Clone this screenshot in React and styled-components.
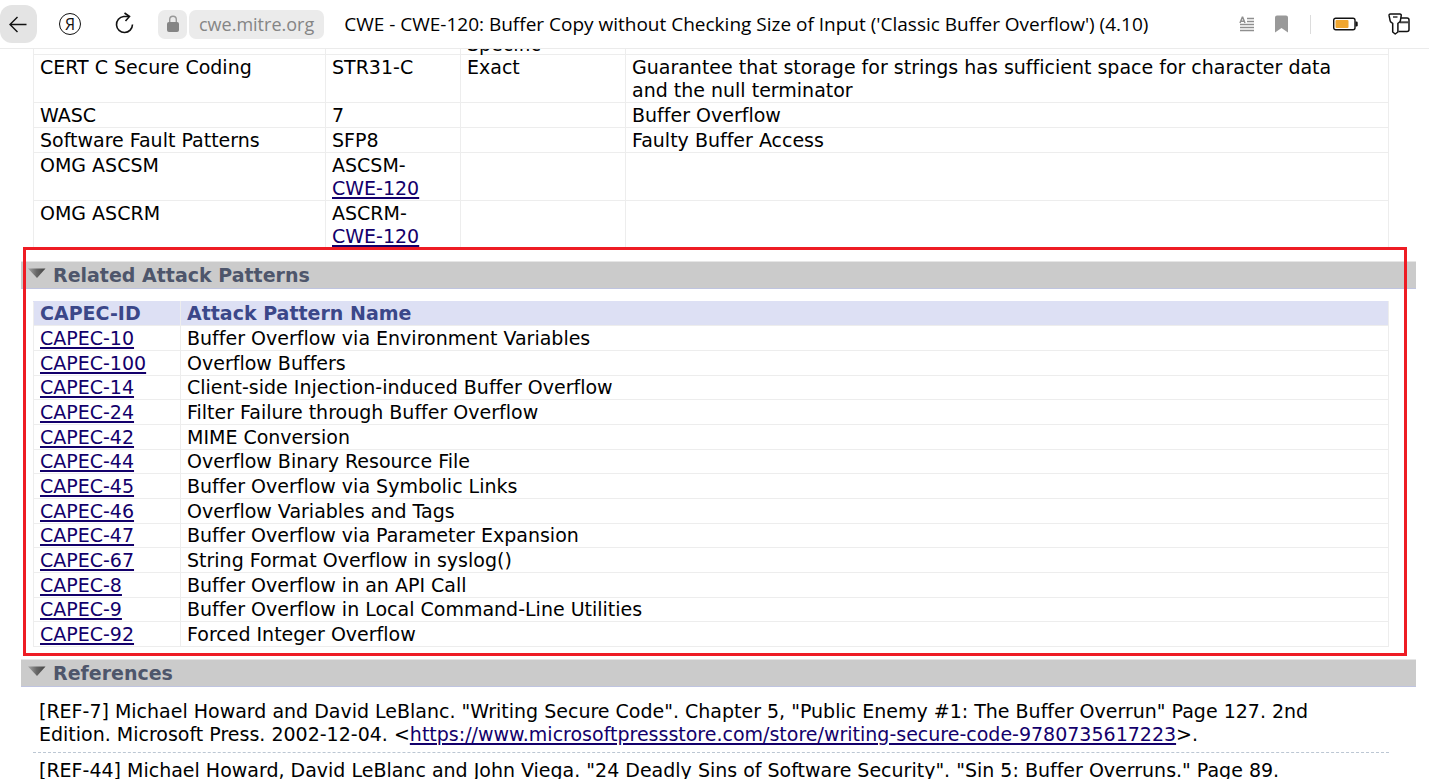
import React from "react";
import styled, { createGlobalStyle } from "styled-components";

const GlobalStyle = createGlobalStyle`
  * {
    box-sizing: border-box;
  }

  html, body, #root {
    height: 100%;
  }

  body {
    margin: 0;
    overflow: hidden;
    background: #fff;
    color: #000;
    font-family: "DejaVu Sans", Verdana, sans-serif;
    font-size: 19px;
    font-variant-ligatures: none;
    line-height: 23px;
  }
`;

const Window = styled.div`
  display: flex;
  flex-direction: column;
  height: 100%;
`;

const Toolbar = styled.header`
  display: flex;
  flex: none;
  align-items: center;
  height: 49px;
  padding-right: 13px;
  border-bottom: 1px solid #ebebeb;
  background: #fff;
  font-family: "Open Sans", "Noto Sans", sans-serif;
  white-space: nowrap;
`;

const ToolButton = styled.button`
  display: flex;
  flex: none;
  align-items: center;
  justify-content: center;
  width: ${props => props.$width || 36}px;
  height: 38px;
  margin: 0 ${props => props.$gap || 0}px 0 0;
  padding: 0;
  border: 0;
  border-radius: 12px;
  background: ${props => (props.$active ? "#e4e4e4" : "none")};
`;

const AddressButton = styled.button`
  display: flex;
  flex: none;
  align-items: center;
  justify-content: center;
  min-width: 29px;
  height: 29px;
  margin: 0 ${props => props.$gap}px 0 0;
  padding: 0 ${props => props.$pad || 0}px;
  border: 0;
  border-radius: 7px;
  background: #ebebeb;
  color: #858585;
  font-family: inherit;
  font-size: 18px;
  line-height: 29px;
`;

const YandexMark = styled.span`
  display: flex;
  align-items: center;
  justify-content: center;
  width: 22px;
  height: 22px;
  border: 1px solid #111;
  border-radius: 50%;
  color: #111;
  font-family: "Open Sans", sans-serif;
  font-size: 16px;
  line-height: 20px;
`;

const PageTitle = styled.div`
  flex: 1;
  min-width: 0;
  overflow: hidden;
  font-size: 19px;
  line-height: 29px;
`;

const Divider = styled.span`
  flex: none;
  width: 1px;
  height: 19px;
  margin: 0 17px 0 12px;
  background: #dcdcdc;
`;

const Page = styled.main`
  flex: 1;
  min-height: 0;
  overflow: hidden;
  padding: 0 13px 0 21px;
`;

const Mappings = styled.div`
  margin-top: -16px;
  padding: 0 27px 0 12px;
`;

const Table = styled.table`
  width: 100%;
  border-collapse: collapse;
  table-layout: fixed;
`;

const Col = styled.col`
  width: ${props => (props.$width ? `${props.$width}px` : "auto")};
`;

const Cell = styled.td`
  padding: 1px 6px 0;
  border: 1px solid #ededed;
  vertical-align: top;
`;

const HeadCell = styled.th`
  padding: 0 6px;
  border: 1px solid #ededed;
  border-top-color: #dde0f4;
  background: #dde0f4;
  color: #3b4789;
  text-align: left;
`;

const ScrolledRow = styled.tr`
  line-height: 19px;
`;

const PatternRow = styled.tr`
  &:nth-child(3n) td {
    padding-top: 0;
  }
`;

const Link = styled.a`
  color: #13006b;
  text-decoration: underline;
  text-decoration-thickness: 2px;
  text-underline-offset: 2px;
`;

const Section = styled.section`
  position: relative;
  padding-top: 12px;
`;

const Marker = styled.div`
  position: absolute;
  inset: -2px 9px -9px 2px;
  border: 3px solid #ee1c24;
  pointer-events: none;
`;

const SectionBar = styled.h2`
  display: flex;
  align-items: center;
  gap: 7px;
  height: 28px;
  margin: 0;
  padding: 0 7px;
  border-top: 1px solid #e6e6e6;
  border-bottom: 1px solid #bfc4e0;
  background: #cbcbcb;
  color: #4e566b;
  font-size: 19px;
  line-height: 26px;
`;

const SectionBody = styled.div`
  padding: ${props => props.$top}px 27px 0 12px;
`;

const Reference = styled.p`
  margin: 0;
  padding: 6px;
  border-bottom: 1px dashed #bcc7d3;
`;

const mappings = [
  {
    name: "CERT C Secure Coding",
    id: "STR31-C",
    fit: "Exact",
    node: <>Guarantee that storage for strings has sufficient space for character data<br />and the null terminator</>,
  },
  { name: "WASC", id: "7", node: "Buffer Overflow" },
  { name: "Software Fault Patterns", id: "SFP8", node: "Faulty Buffer Access" },
  { name: "OMG ASCSM", id: "ASCSM-", link: "CWE-120" },
  { name: "OMG ASCRM", id: "ASCRM-", link: "CWE-120" },
];

const patterns = [
  ["CAPEC-10", "Buffer Overflow via Environment Variables"],
  ["CAPEC-100", "Overflow Buffers"],
  ["CAPEC-14", "Client-side Injection-induced Buffer Overflow"],
  ["CAPEC-24", "Filter Failure through Buffer Overflow"],
  ["CAPEC-42", "MIME Conversion"],
  ["CAPEC-44", "Overflow Binary Resource File"],
  ["CAPEC-45", "Buffer Overflow via Symbolic Links"],
  ["CAPEC-46", "Overflow Variables and Tags"],
  ["CAPEC-47", "Buffer Overflow via Parameter Expansion"],
  ["CAPEC-67", "String Format Overflow in syslog()"],
  ["CAPEC-8", "Buffer Overflow in an API Call"],
  ["CAPEC-9", "Buffer Overflow in Local Command-Line Utilities"],
  ["CAPEC-92", "Forced Integer Overflow"],
];

const pressUrl = "https://www.microsoftpressstore.com/store/writing-secure-code-9780735617223";

const BackIcon = () => (
  <svg width="20" height="18" viewBox="0 0 20 18" fill="none" stroke="#111" strokeWidth="1.4">
    <path d="M17.500 9.500H1M8.500 2 1 9.500 8.500 17" />
  </svg>
);

const ReloadIcon = () => (
  <svg width="20" height="24" viewBox="1 0 20 24" fill="none" stroke="#111" strokeWidth="1.600">
    <path d="M16 4.500h-5.300A8 8 0 1 0 19.500 12.600" />
    <path d="M11.500 1 16.500 4.500l-4 4.600" />
  </svg>
);

const LockIcon = () => (
  <svg width="14" height="18" viewBox="0 0 14 18" fill="none">
    <path d="M3.700 8V4.500a3.300 3.300 0 0 1 6.600 0V8" stroke="#999" strokeWidth="1.400" />
    <rect x="1" y="7" width="12" height="10" rx="2" fill="#858585" />
  </svg>
);

const ReaderIcon = () => (
  <svg width="16" height="16" viewBox="0 0 16 16" fill="none" stroke="#8f8f8f">
    <path d="M8 2.500h7M8 5.500h7M1 8.500h14M1 11.500h14M1 14.500h14" strokeWidth="1.400" />
    <path d="M1 7 3.300 1.200h.4L6 7M1.800 5.200h3.400" strokeWidth="1.500" />
  </svg>
);

const BookmarkIcon = () => (
  <svg width="13" height="18" viewBox="0 0 13 18">
    <path d="M0 2.500Q0 .5 2 .5h9q2 0 2 2v15l-6.500-4.500L0 17.500z" fill="#999" />
  </svg>
);

const BatteryIcon = () => (
  <svg width="25" height="14" viewBox="0 0 25 14">
    <rect x=".7" y="1.200" width="21.300" height="11.600" rx="2" fill="#fff" stroke="#111" strokeWidth="1.400" />
    <rect x="2.500" y="3" width="13" height="8" rx="1" fill="#f0a62f" />
    <path d="M22.500 4.500h1q1.200 0 1.200 1.200v2.600q0 1.200-1.200 1.200h-1z" fill="#111" />
  </svg>
);

const KeyIcon = () => (
  <svg width="22" height="22" viewBox="0 0 22 22" fill="none" stroke="#111" strokeWidth="1.500" strokeLinejoin="round">
    <path d="M12 5h7q2 0 2 2v9.500q0 2-2 2h-8.500" />
    <path d="M12 9.300h9" strokeWidth="2" stroke="#444" />
    <path d="M2.500 1h9.300q1.700 0 1.400 1.700l-.8 5q-.2 1.300-1.500 2l-1 .6v8.700L7.200 21l-2.500-2V10.300l-1.100-.6Q2.300 9 2.100 7.700l-1-5Q.8 1 2.500 1z" fill="#fff" />
    <path d="M5 4h4.500" strokeWidth="1.300" />
  </svg>
);

const TriangleIcon = () => (
  <svg width="18" height="18" viewBox="0 0 18 18" aria-hidden="true">
    <defs>
      <linearGradient id="triangle" x1="0" y1="0" x2="1" y2="0">
        <stop offset="0" stopColor="#a5a5a5" />
        <stop offset="0.5" stopColor="#666" />
        <stop offset="1" stopColor="#444" />
      </linearGradient>
    </defs>
    <path d="M0 2.500h17.500L9 12z" fill="url(#triangle)" />
  </svg>
);

const App = () => (
  <Window>
    <GlobalStyle />
    <Toolbar>
      <ToolButton $active $width={37} $gap={15} aria-label="Back"><BackIcon /></ToolButton>
      <ToolButton $gap={18} aria-label="Yandex"><YandexMark>Я</YandexMark></ToolButton>
      <ToolButton $gap={16} aria-label="Reload"><ReloadIcon /></ToolButton>
      <AddressButton $gap={2} aria-label="Site security"><LockIcon /></AddressButton>
      <AddressButton $gap={20} $pad={10}>cwe.mitre.org</AddressButton>
      <PageTitle>CWE - CWE-120: Buffer Copy without Checking Size of Input ('Classic Buffer Overflow') (4.10)</PageTitle>
      <ToolButton $width={34} aria-label="Reader mode"><ReaderIcon /></ToolButton>
      <ToolButton $width={34} aria-label="Bookmark"><BookmarkIcon /></ToolButton>
      <Divider />
      <ToolButton $width={34} $gap={20} aria-label="Battery"><BatteryIcon /></ToolButton>
      <ToolButton $width={34} aria-label="Passwords"><KeyIcon /></ToolButton>
    </Toolbar>
    <Page>
      <Mappings>
        <Table>
          <colgroup>
            <Col $width={292} />
            <Col $width={135} />
            <Col $width={165} />
            <Col />
          </colgroup>
          <tbody>
            <ScrolledRow>
              <Cell />
              <Cell />
              <Cell>Specific</Cell>
              <Cell />
            </ScrolledRow>
            {mappings.map(row => (
              <tr key={row.name}>
                <Cell>{row.name}</Cell>
                <Cell>
                  {row.id}
                  {row.link && <><br /><Link href="#cwe-120">{row.link}</Link></>}
                </Cell>
                <Cell>{row.fit}</Cell>
                <Cell>{row.node}</Cell>
              </tr>
            ))}
          </tbody>
        </Table>
      </Mappings>
      <Section>
        <SectionBar><TriangleIcon />Related Attack Patterns</SectionBar>
        <SectionBody $top={12}>
          <Table>
            <colgroup>
              <Col $width={147} />
              <Col />
            </colgroup>
            <thead>
              <tr>
                <HeadCell>CAPEC-ID</HeadCell>
                <HeadCell>Attack Pattern Name</HeadCell>
              </tr>
            </thead>
            <tbody>
              {patterns.map(([id, name]) => (
                <PatternRow key={id}>
                  <Cell><Link href={`#${id}`}>{id}</Link></Cell>
                  <Cell>{name}</Cell>
                </PatternRow>
              ))}
            </tbody>
          </Table>
        </SectionBody>
        <Marker />
      </Section>
      <Section>
        <SectionBar><TriangleIcon />References</SectionBar>
        <SectionBody $top={7}>
          <Reference>
            [REF-7] Michael Howard and David LeBlanc. "Writing Secure Code". Chapter 5, "Public Enemy #1: The
            Buffer Overrun" Page 127. 2nd Edition. Microsoft Press. 2002-12-04.
            {" "}&lt;<Link href={pressUrl}>{pressUrl}</Link>&gt;.
          </Reference>
          <Reference>
            [REF-44] Michael Howard, David LeBlanc and John Viega. "24 Deadly Sins of Software
            Security". "Sin 5: Buffer Overruns." Page 89.
          </Reference>
        </SectionBody>
      </Section>
    </Page>
  </Window>
);

export default App;
